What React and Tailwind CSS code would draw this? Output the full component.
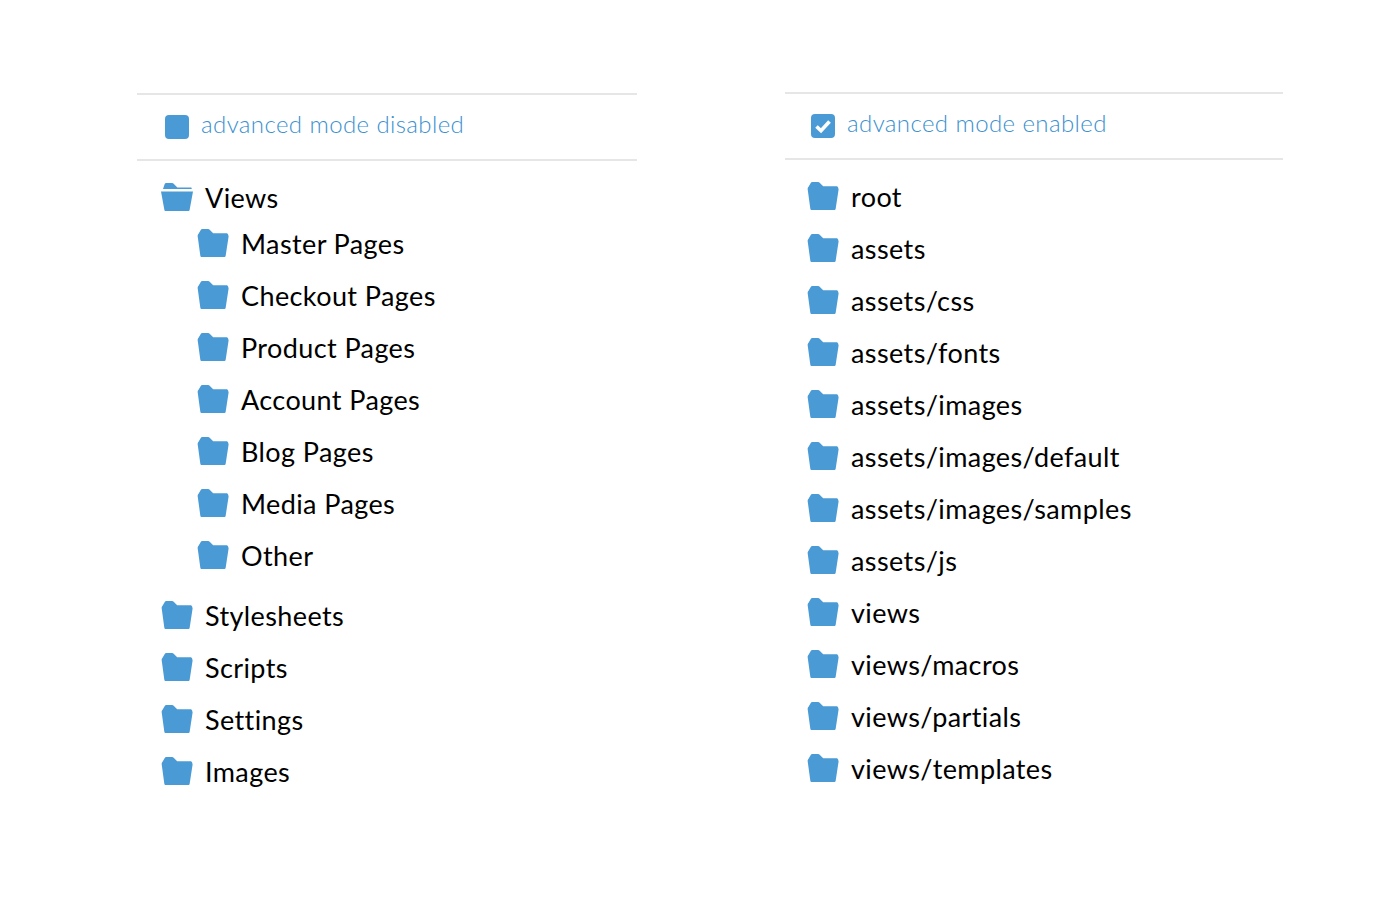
const LEFT_CHILDREN = [
  "Master Pages",
  "Checkout Pages",
  "Product Pages",
  "Account Pages",
  "Blog Pages",
  "Media Pages",
  "Other",
];

const LEFT_ROOTS = ["Stylesheets", "Scripts", "Settings", "Images"];

const RIGHT_FOLDERS = [
  "root",
  "assets",
  "assets/css",
  "assets/fonts",
  "assets/images",
  "assets/images/default",
  "assets/images/samples",
  "assets/js",
  "views",
  "views/macros",
  "views/partials",
  "views/templates",
];

const FolderIcon = () => (
  <svg width="32" height="28" viewBox="0 0 32 28" className="shrink-0">
    <path
      d="M0.6 6.8 C0.7 6 1.2 5.4 1.7 4.6 L3.6 1.2 C4 0.4 4.6 0 5.4 0 H11 C11.8 0 12.3 0.3 12.9 0.9 L16.2 4.2 H29.4 C30.4 4.2 31 4.9 31.2 5.8 L31.6 7.4 L28.7 26.4 C28.6 27.4 28 28 27 28 H5 C4 28 3.4 27.4 3.3 26.4 Z"
      fill="#4a9bd5"
    />
  </svg>
);

const OpenFolderIcon = () => (
  <svg width="32" height="28" viewBox="0 0 32 28" className="shrink-0">
    <path
      d="M2 6 L3.6 1.2 C3.9 0.4 4.4 0 5.2 0 H11 C11.8 0 12.3 0.3 12.9 0.9 L16.4 4.6 H30.4 L30.8 6 Z"
      fill="#4a9bd5"
    />
    <path
      d="M0 8.4 H32 L28.7 26.4 C28.6 27.4 28 28 27 28 H5 C4 28 3.4 27.4 3.3 26.4 Z"
      fill="#4a9bd5"
    />
  </svg>
);

const FolderRow = ({ name, open }) => (
  <div className="flex h-[52px] items-center gap-[12px]">
    {open ? <OpenFolderIcon /> : <FolderIcon />}
    <span className="pt-[2px] text-[27px] tracking-[0.4px] text-black">{name}</span>
  </div>
);

const ModeHeader = ({ checked, label, className }) => (
  <div className={`flex h-[68px] items-center gap-[12px] border-y-2 border-[#e6e6e6] ${className}`}>
    <div className="flex h-[24px] w-[24px] items-center justify-center rounded-[4px] bg-[#4a9bd5]">
      {checked ? (
        <svg width="18" height="15" viewBox="0 0 18 15">
          <path d="M2.5 7.5 L7 11.8 L15.5 2.5" fill="none" stroke="#fff" strokeWidth="3.6" />
        </svg>
      ) : null}
    </div>
    <span className="pb-[7px] text-[24px] font-light tracking-[0.4px] text-[#3a90cf]">{label}</span>
  </div>
);

export default function App() {
  return (
    <div className="flex min-h-[900px] items-start gap-[148px] bg-white pl-[137px] pt-[92px] font-['Lato',sans-serif]">
      <div className="mt-px w-[500px]">
        <ModeHeader label="advanced mode disabled" className="pl-[28px]" />
        <div className="mt-[10px] pl-[24px]">
          <FolderRow name="Views" open />
          <div className="-mt-[6px] mb-[8px] pl-[36px]">
            {LEFT_CHILDREN.map((name) => (
              <FolderRow key={name} name={name} />
            ))}
          </div>
          {LEFT_ROOTS.map((name) => (
            <FolderRow key={name} name={name} />
          ))}
        </div>
      </div>

      <div className="w-[498px]">
        <ModeHeader checked label="advanced mode enabled" className="pl-[26px]" />
        <div className="mt-[10px] pl-[22px]">
          {RIGHT_FOLDERS.map((name) => (
            <FolderRow key={name} name={name} />
          ))}
        </div>
      </div>
    </div>
  );
}
